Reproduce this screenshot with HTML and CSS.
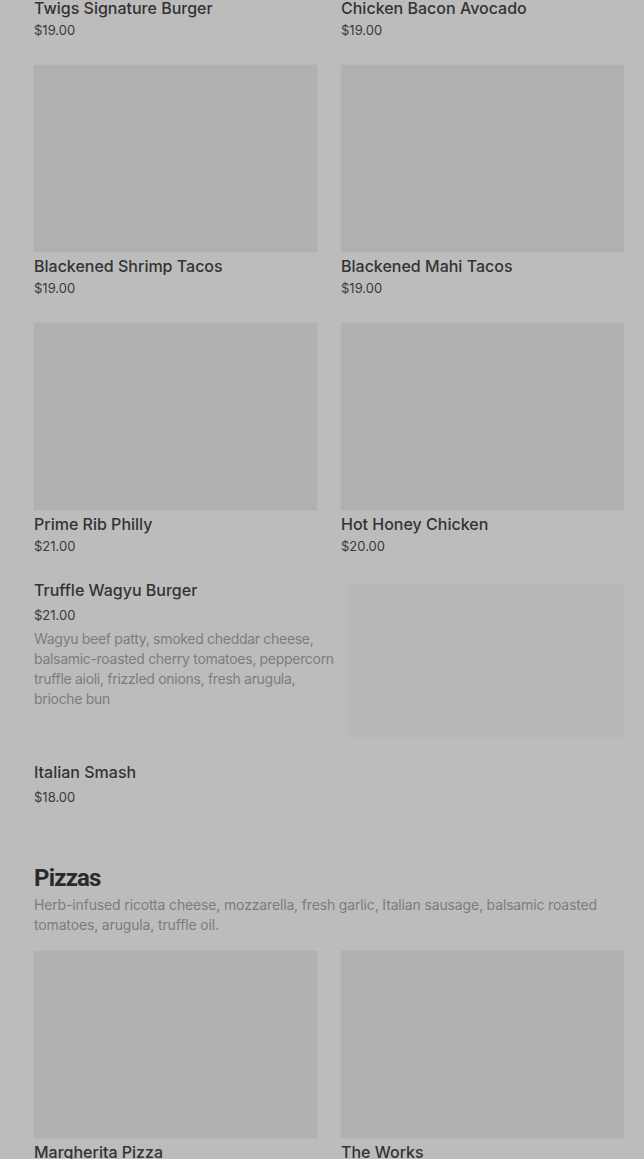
FILE: index.html
```html
<!DOCTYPE html>
<html>
  <head>
    <title>Menu</title>
    <link rel="stylesheet" href="styles.css">
  </head>
  <body>
    <main class="menu">
      <section class="category">
        <div class="grid">
          <div class="card">
            <div class="card-img"></div>
            <div class="item-name">Twigs Signature Burger</div>
            <div class="item-price">$19.00</div>
          </div>
          <div class="card">
            <div class="card-img"></div>
            <div class="item-name">Chicken Bacon Avocado</div>
            <div class="item-price">$19.00</div>
          </div>
          <div class="card">
            <div class="card-img"></div>
            <div class="item-name">Blackened Shrimp Tacos</div>
            <div class="item-price">$19.00</div>
          </div>
          <div class="card">
            <div class="card-img"></div>
            <div class="item-name">Blackened Mahi Tacos</div>
            <div class="item-price">$19.00</div>
          </div>
          <div class="card">
            <div class="card-img"></div>
            <div class="item-name">Prime Rib Philly</div>
            <div class="item-price">$21.00</div>
          </div>
          <div class="card">
            <div class="card-img"></div>
            <div class="item-name">Hot Honey Chicken</div>
            <div class="item-price">$20.00</div>
          </div>
        </div>

        <div class="list">
          <div class="row">
            <div class="row-text">
              <div class="item-name">Truffle Wagyu Burger</div>
              <div class="item-price">$21.00</div>
              <p class="item-desc">
                Wagyu beef patty, smoked cheddar cheese, balsamic-roasted cherry tomatoes, peppercorn truffle aioli, frizzled onions, fresh arugula, brioche bun
              </p>
            </div>
            <div class="row-img"></div>
          </div>
          <div class="row">
            <div class="row-text">
              <div class="item-name">Italian Smash</div>
              <div class="item-price">$18.00</div>
            </div>
          </div>
        </div>
      </section>

      <section class="category">
        <h2 class="category-title">Pizzas</h2>
        <p class="category-desc">
          Herb-infused ricotta cheese, mozzarella, fresh garlic, Italian sausage, balsamic roasted tomatoes, arugula, truffle oil.
        </p>
        <div class="grid">
          <div class="card">
            <div class="card-img"></div>
            <div class="item-name">Margherita Pizza</div>
            <div class="item-price">$17.00</div>
          </div>
          <div class="card">
            <div class="card-img"></div>
            <div class="item-name">The Works</div>
            <div class="item-price">$20.00</div>
          </div>
        </div>
      </section>
    </main>
  </body>
</html>
```

FILE: styles.css
```css
body {
  margin: 0;
  background: #bcbcbc;
  color: #2e2e2e;
  font-family: Inter, "Noto Sans", sans-serif;
  overflow: hidden;
}
.menu {
  /* page is scrolled down past the first row of pictures */
  margin-top: -193px;
  padding: 0 20px 0 34px;
}
.grid {
  display: grid;
  grid-template-columns: 1fr 1fr;
  column-gap: 24px;
  row-gap: 26px;
}
.card-img {
  height: 187px;
  background: #b0b0b0;
  box-shadow: 0 0 0 1px #b9b9b9;
  margin-bottom: 4px;
}
.item-name {
  font-size: 16px;
  line-height: 20px;
  font-weight: 500;
  color: #333;
}
.item-price {
  font-size: 13px;
  line-height: 18px;
  margin-top: 3px;
  color: #3a3a3a;
}
.list {
  margin-top: 25px;
}
.row {
  display: flex;
  gap: 8px;
  margin-bottom: 24px;
}
.row-text {
  flex: 1;
}
.row .item-price {
  margin-top: 6px;
}
.item-desc {
  margin: 5px 0 0;
  font-size: 14px;
  line-height: 20px;
  letter-spacing: -0.3px;
  color: #7c7c7c;
}
.row-img {
  width: 276px;
  height: 155px;
  margin-top: 3px;
  background: #b8b8b8;
}
.category + .category {
  margin-top: 57px;
}
.category-title {
  margin: 0;
  font-family: Roboto, "Liberation Sans", sans-serif;
  font-size: 24px;
  line-height: 30px;
  font-weight: 700;
  color: #2a2a2a;
  letter-spacing: -0.8px;
}
.category-desc {
  margin: 2px 0 16px;
  font-size: 14px;
  line-height: 20px;
  letter-spacing: -0.15px;
  color: #7c7c7c;
}
```
